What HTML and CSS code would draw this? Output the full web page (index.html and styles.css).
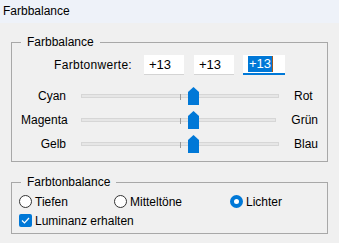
FILE: index.html
```html
<!DOCTYPE html>
<html lang="de">
<head>
    <meta charset="UTF-8">
    <meta name="viewport" content="width=device-width, initial-scale=1.0">
    <title>Farbbalance</title>
    <link rel="stylesheet" href="styles.css">
</head>
<body>

    <div class="titlebar">Farbbalance</div>

    <fieldset class="group">
        <legend>Farbbalance</legend>

        <div class="values-row">
            <span class="values-label">Farbtonwerte:</span>
            <div class="field">+13</div>
            <div class="field">+13</div>
            <div class="field active"><span class="selected">+13</span><span class="caret"></span></div>
        </div>

        <div class="slider-row">
            <span class="side-left">Cyan</span>
            <div class="track"><span class="tick"></span><span class="thumb" style="left: 106px"></span></div>
            <span class="side-right">Rot</span>
        </div>
        <div class="slider-row">
            <span class="side-left">Magenta</span>
            <div class="track"><span class="tick"></span><span class="thumb" style="left: 106px"></span></div>
            <span class="side-right">Grün</span>
        </div>
        <div class="slider-row">
            <span class="side-left">Gelb</span>
            <div class="track"><span class="tick"></span><span class="thumb" style="left: 106px"></span></div>
            <span class="side-right">Blau</span>
        </div>
    </fieldset>

    <fieldset class="group tone-group">
        <legend>Farbtonbalance</legend>

        <div class="radio-row">
            <label class="option option-first"><span class="radio"></span>Tiefen</label>
            <label class="option option-mid"><span class="radio"></span>Mitteltöne</label>
            <label class="option"><span class="radio checked"></span>Lichter</label>
        </div>
        <div class="check-row">
            <label class="option">
                <span class="checkbox">
                    <svg width="13" height="13" viewBox="0 0 13 13"><path d="M3 6.5 L5.5 9 L10 4" fill="none" stroke="#fff" stroke-width="1.2"/></svg>
                </span>Luminanz erhalten
            </label>
        </div>
    </fieldset>

</body>
</html>
```

FILE: styles.css
```css
body {
    margin: 0;
    background: #f0f0f0;
    font-family: "Liberation Sans", Arial, sans-serif;
    font-size: 12px;
    color: #000;
}

.titlebar {
    height: 23px;
    line-height: 22px;
    padding-left: 3px;
    background: #eef2f9;
}

.group {
    margin: 11px 11px 0;
    padding: 5px 9px 5px 9px;
    border: 1px solid #a8a8a8;
    min-width: 0;
}

.group legend {
    padding: 0 6px;
    line-height: 16px;
}

.values-row {
    display: flex;
    align-items: center;
    height: 20px;
}

.values-label {
    width: 111px;
    text-align: right;
    margin-right: 12px;
    letter-spacing: 0.3px;
}

.field {
    width: 40px;
    height: 20px;
    box-sizing: border-box;
    margin-right: 10px;
    padding-left: 5px;
    background: #fff;
    border-bottom: 1px solid #d4d4d4;
    line-height: 20px;
    font-size: 13px;
    display: flex;
    align-items: center;
}

.field.active {
    width: 42px;
    margin-right: 0;
    margin-left: -1px;
    border-bottom: 2px solid #0078d7;
}

.selected {
    background: #0078d7;
    color: #fff;
    line-height: 16px;
    padding: 0 1px;
}

.caret {
    width: 1px;
    height: 16px;
    background: #a05a20;
}

.slider-row {
    display: flex;
    align-items: center;
    height: 24px;
}

.values-row + .slider-row {
    margin-top: 9px;
}

.side-left {
    width: 45px;
    text-align: right;
}

.track {
    position: relative;
    width: 198px;
    height: 4px;
    margin: 0 15px;
    box-sizing: border-box;
    background: #e6e6e6;
    border: 1px solid #d6d6d6;
}

.tick {
    position: absolute;
    left: 98px;
    top: -1px;
    width: 1px;
    height: 6px;
    background: #9a9a9a;
}

.thumb {
    position: absolute;
    top: -8px;
    width: 11px;
    height: 18px;
    background: #0078d7;
    clip-path: polygon(0 5px, 5.5px 0, 11px 5px, 11px 18px, 0 18px);
}

.tone-group {
    margin-top: 12px;
    padding: 2px 9px 3px 9px;
}

.radio-row,
.check-row {
    display: flex;
    align-items: center;
    height: 19px;
    margin-left: -2px;
}

.option {
    display: flex;
    align-items: center;
    gap: 3px;
}

.option-first {
    width: 95px;
}

.option-mid {
    width: 116px;
}

.radio {
    width: 13px;
    height: 13px;
    box-sizing: border-box;
    border-radius: 50%;
    border: 1px solid #333;
    background: #fff;
}

.radio.checked {
    border: 4px solid #0078d7;
}

.checkbox {
    width: 13px;
    height: 13px;
    border-radius: 2px;
    background: #0078d7;
    display: flex;
}
```
